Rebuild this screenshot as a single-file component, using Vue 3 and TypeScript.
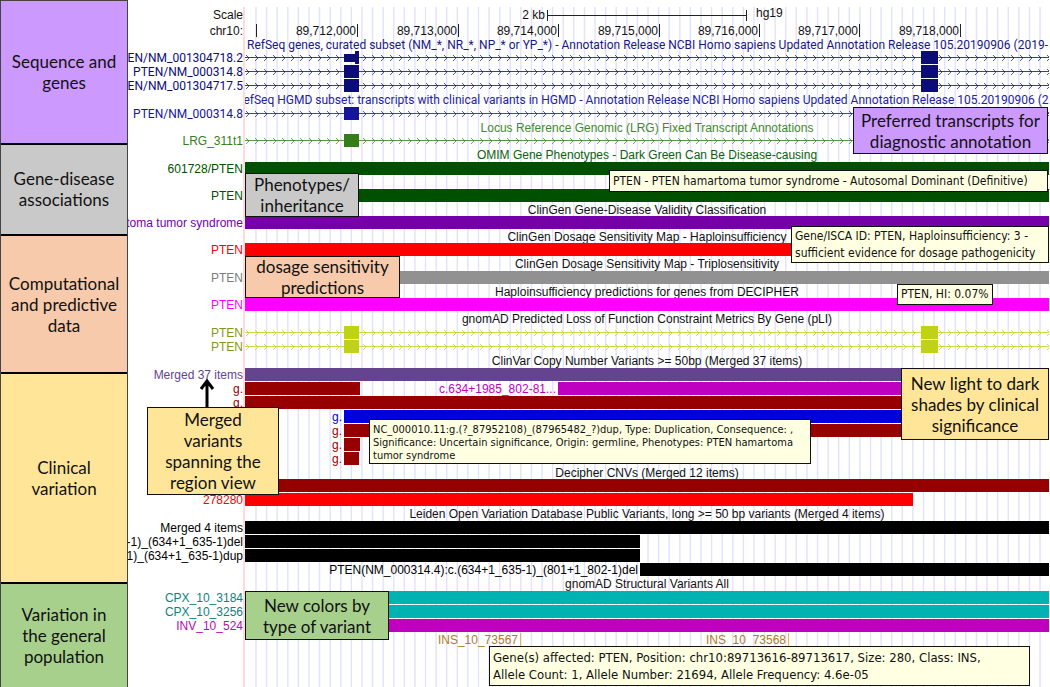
<script setup lang="ts">
interface Bar {
  from: number
  to: number
  color?: string
  label?: string
  thin?: boolean
}

interface Row {
  label: string
  color: string
  text?: string
  bars: Bar[]
  intron?: boolean
}

interface Track {
  title: string
  titleColor?: string
  titleClass?: string
  condensed?: boolean
  rows: Row[]
}

interface Note {
  name: string
  lines: string[]
}

/* Width of the plotted region in drawing units; bars are placed as a share of it. */
const SPAN = 804
const pct = (n: number): string => `${(n / SPAN) * 100}%`
const place = (bar: Bar, row: Row) => ({
  left: pct(bar.from),
  width: pct(bar.to - bar.from),
  background: bar.color ?? row.color,
})

const full: Bar[] = [{ from: 0, to: SPAN }]
const exons: Bar[] = [
  { from: 99, to: 114 },
  { from: 676, to: 693 },
]
const ink = '#111111'
const darkRed = '#960000'

const categories = [
  { name: 'sequence', label: 'Sequence and genes' },
  { name: 'disease', label: 'Gene-disease associations' },
  { name: 'computed', label: 'Computational and predictive data' },
  { name: 'clinical', label: 'Clinical variation' },
  { name: 'population', label: 'Variation in the general population' },
]

const gridLines = Array.from({ length: 75 }, (_, i) => 11 + i * 10.595)
const ticks = [
  { at: 11, label: '' },
  { at: 112, label: '89,712,000' },
  { at: 213, label: '89,713,000' },
  { at: 313, label: '89,714,000' },
  { at: 414, label: '89,715,000' },
  { at: 514, label: '89,716,000' },
  { at: 614, label: '89,717,000' },
  { at: 715, label: '89,718,000' },
]
const chevrons = Array.from({ length: 260 }, (_, i) => `M${1 + i * 9} 4l3 3l-3 3`).join('')

const tracks: Track[] = [
  {
    title:
      'RefSeq genes, curated subset (NM_*, NR_*, NP_* or YP_*) - Annotation Release NCBI Homo sapiens Updated Annotation Release 105.20190906 (2019-1',
    titleColor: '#191984',
    titleClass: 'long',
    condensed: true,
    rows: [
      {
        label: 'PTEN/NM_001304718.2',
        color: '#0c0c78',
        intron: true,
        bars: [
          { from: 99, to: 110, thin: true },
          { from: 110, to: 114 },
          { from: 676, to: 693 },
        ],
      },
      { label: 'PTEN/NM_000314.8', color: '#0c0c78', intron: true, bars: exons },
      { label: 'PTEN/NM_001304717.5', color: '#0c0c78', intron: true, bars: exons },
    ],
  },
  {
    title:
      'RefSeq HGMD subset: transcripts with clinical variants in HGMD - Annotation Release NCBI Homo sapiens Updated Annotation Release 105.20190906 (2019',
    titleColor: '#2222a8',
    titleClass: 'long tall shifted',
    condensed: true,
    rows: [{ label: 'PTEN/NM_000314.8', color: '#1414a0', intron: true, bars: exons }],
  },
  {
    title: 'Locus Reference Genomic (LRG) Fixed Transcript Annotations',
    titleColor: '#3f8a2c',
    rows: [{ label: 'LRG_311t1', color: '#357c1c', intron: true, bars: exons }],
  },
  {
    title: 'OMIM Gene Phenotypes - Dark Green Can Be Disease-causing',
    titleColor: '#0c620c',
    titleClass: 'tall',
    rows: [{ label: '601728/PTEN', color: '#005000', bars: full }],
  },
  { title: '', rows: [{ label: 'PTEN', color: '#005000', bars: full }] },
  {
    title: 'ClinGen Gene-Disease Validity Classification',
    rows: [{ label: 'PTEN hamartoma tumor syndrome', color: '#7500a8', bars: full }],
  },
  {
    title: 'ClinGen Dosage Sensitivity Map - Haploinsufficiency',
    rows: [{ label: 'PTEN', color: '#ff0000', bars: full }],
  },
  {
    title: 'ClinGen Dosage Sensitivity Map - Triplosensitivity',
    titleClass: 'tall',
    rows: [{ label: 'PTEN', color: '#919191', text: '#7c7c7c', bars: full }],
  },
  {
    title: 'Haploinsufficiency predictions for genes from DECIPHER',
    rows: [{ label: 'PTEN', color: '#ff00ff', bars: full }],
  },
  {
    title: 'gnomAD Predicted Loss of Function Constraint Metrics By Gene (pLI)',
    titleClass: 'tall',
    rows: [
      { label: 'PTEN', color: '#bfd217', text: '#869618', intron: true, bars: exons },
      { label: 'PTEN', color: '#bfd217', text: '#869618', intron: true, bars: exons },
    ],
  },
  {
    title: 'ClinVar Copy Number Variants >= 50bp (Merged 37 items)',
    titleClass: 'tall',
    rows: [
      { label: 'Merged 37 items', color: '#64438f', bars: full },
      {
        label: 'g.',
        color: darkRed,
        bars: [
          { from: 0, to: 115 },
          { from: 313, to: SPAN, color: '#c000c0', label: 'c.634+1985_802-81...' },
        ],
      },
      { label: 'g.', color: darkRed, bars: full },
      { label: '', color: '#0000df', bars: [{ from: 99, to: SPAN, label: 'g.' }] },
      { label: '', color: darkRed, bars: [{ from: 99, to: SPAN, label: 'g.' }] },
      { label: '', color: darkRed, bars: [{ from: 99, to: 115, label: 'g.' }] },
      { label: '', color: darkRed, bars: [{ from: 99, to: 114, label: 'g.' }] },
    ],
  },
  {
    title: 'Decipher CNVs (Merged 12 items)',
    rows: [
      { label: '', color: darkRed, bars: full },
      { label: '278280', color: '#ff0000', bars: [{ from: 0, to: 668 }] },
    ],
  },
  {
    title: 'Leiden Open Variation Database Public Variants, long >= 50 bp variants (Merged 4 items)',
    titleClass: 'tall',
    rows: [
      { label: 'Merged 4 items', color: '#000000', bars: full },
      { label: '3-1)_(634+1_635-1)del', color: '#000000', bars: [{ from: 0, to: 395 }] },
      { label: '-1)_(634+1_635-1)dup', color: '#000000', bars: [{ from: 0, to: 395 }] },
      {
        label: '',
        color: '#000000',
        bars: [{ from: 395, to: SPAN, label: 'PTEN(NM_000314.4):c.(634+1_635-1)_(801+1_802-1)del' }],
      },
    ],
  },
  {
    title: 'gnomAD Structural Variants All',
    titleClass: 'tall',
    rows: [
      { label: 'CPX_10_3184', color: '#00b3b3', text: '#108080', bars: full },
      { label: 'CPX_10_3256', color: '#00b3b3', text: '#108080', bars: full },
      { label: 'INV_10_524', color: '#bf00bf', text: '#b808b8', bars: full },
      {
        label: '',
        color: '#f5b040',
        text: '#b07c1c',
        bars: [
          { from: 275, to: 276, label: 'INS_10_73567' },
          { from: 543, to: 544, label: 'INS_10_73568' },
        ],
      },
    ],
  },
]

const callouts: Note[] = [
  { name: 'preferred', lines: ['Preferred transcripts for', 'diagnostic annotation'] },
  { name: 'phenotypes', lines: ['Phenotypes/', 'inheritance'] },
  { name: 'dosage', lines: ['dosage sensitivity', 'predictions'] },
  { name: 'merged', lines: ['Merged', 'variants', 'spanning the', 'region view'] },
  { name: 'shades', lines: ['New light to dark', 'shades by clinical', 'significance'] },
  { name: 'colors', lines: ['New colors by', 'type of variant'] },
]

const tooltips: Note[] = [
  { name: 'tip-omim', lines: ['PTEN - PTEN hamartoma tumor syndrome - Autosomal Dominant (Definitive)'] },
  {
    name: 'tip-isca',
    lines: ['Gene/ISCA ID: PTEN, Haploinsufficiency: 3 -', 'sufficient evidence for dosage pathogenicity'],
  },
  { name: 'tip-hi', lines: ['PTEN, HI: 0.07%'] },
  {
    name: 'tip-dup',
    lines: [
      'NC_000010.11:g.(?_87952108)_(87965482_?)dup, Type: Duplication, Consequence: ,',
      'Significance: Uncertain significance, Origin: germline, Phenotypes: PTEN hamartoma',
      'tumor syndrome',
    ],
  },
  {
    name: 'tip-ins',
    lines: [
      'Gene(s) affected: PTEN, Position: chr10:89713616-89713617, Size: 280, Class: INS,',
      'Allele Count: 1, Allele Number: 21694, Allele Frequency: 4.6e-05',
    ],
  },
]
</script>

<template>
  <div class="page">
    <aside class="categories">
      <div v-for="c in categories" :key="c.name" class="category" :class="c.name">
        <span>{{ c.label }}</span>
      </div>
    </aside>

    <main class="browser">
      <div class="backdrop">
        <svg class="grid" :viewBox="`0 0 ${SPAN} 100`" preserveAspectRatio="none" aria-hidden="true">
          <line v-for="x in gridLines" :key="x" :x1="x" :x2="x" y1="0" y2="100" />
        </svg>
      </div>

      <div class="row scale-row">
        <div class="label">Scale</div>
        <div class="lane">
          <span class="before" :style="{ right: pct(SPAN - 302) }">2 kb</span>
          <span class="scale-bar" :style="{ left: pct(302), width: pct(200) }"></span>
          <span class="assembly" :style="{ left: pct(511) }">hg19</span>
        </div>
      </div>
      <div class="row">
        <div class="label">chr10:</div>
        <div class="lane">
          <span v-for="t in ticks" :key="t.at" class="tick" :style="{ right: pct(SPAN - t.at - 1) }">{{ t.label }}</span>
        </div>
      </div>

      <section v-for="(track, ti) in tracks" :key="ti" :class="{ condensed: track.condensed }">
        <div class="title" :class="track.titleClass" :style="{ color: track.titleColor ?? ink }">
          <span>{{ track.title }}</span>
        </div>
        <div v-for="(row, ri) in track.rows" :key="ri" class="row" :style="{ color: row.text ?? row.color }">
          <div class="label"><span>{{ row.label }}</span></div>
          <div class="lane">
            <svg v-if="row.intron" class="intron" :style="{ color: row.color }" aria-hidden="true">
              <rect x="0" y="6" width="100%" height="1" />
              <path :d="chevrons" />
            </svg>
            <template v-for="(bar, bi) in row.bars" :key="bi">
              <span
                v-if="bar.label"
                class="before"
                :style="{ right: pct(SPAN - bar.from), color: row.text ?? bar.color ?? row.color }"
              >{{ bar.label }}</span>
              <span class="bar" :class="{ thin: bar.thin }" :style="place(bar, row)"></span>
            </template>
          </div>
        </div>
      </section>

      <svg class="arrow" viewBox="0 0 16 30" aria-hidden="true">
        <path d="M8 30V3M2 11L8 3L14 11" />
      </svg>

      <div v-for="n in callouts" :key="n.name" class="callout" :class="n.name">
        <span v-for="l in n.lines" :key="l">{{ l }}</span>
      </div>
      <div v-for="n in tooltips" :key="n.name" class="tooltip" :class="n.name" role="tooltip">
        <span v-for="l in n.lines" :key="l">{{ l }}</span>
      </div>
    </main>
  </div>
</template>

<style>
body {
  margin: 0;
  background: #ffffff;
}
</style>

<style scoped>
.page {
  display: flex;
  min-height: 100vh;
  overflow: hidden;
  font: 12px/14px "Liberation Sans", Arial, sans-serif;
  color: #111111;
}

.categories {
  box-sizing: border-box;
  flex: 0 0 128px;
  min-width: 0;
  display: grid;
  grid-template-columns: minmax(0, 1fr);
  grid-template-rows: 144fr 91fr 139fr 210fr 103fr;
  border: solid #444444;
  border-width: 1px 1px 0;
}
.category {
  display: flex;
  align-items: center;
  justify-content: center;
  padding: 0 6px;
  text-align: center;
  font: 17px/21px Lato, Carlito, sans-serif;
  color: #111111;
  border-bottom: 2px solid #000000;
}
.category:last-child {
  padding: 0 16px;
  border-bottom: 0;
}
.sequence { background: #cc99ff; }
.disease { background: #c9c9c9; }
.computed { background: #f7caac; }
.clinical { background: #ffe598; }
.population { background: #a8d08d; }

.browser {
  position: relative;
  flex: 1;
  min-width: 0;
  padding: 7px 1px 0 0;
}
.backdrop {
  position: absolute;
  inset: 7px 1px 0 115px;
  border-left: 2px solid #ffdcdc;
}
.grid {
  display: block;
  width: 100%;
  height: 100%;
}
.grid line {
  stroke: #e2e2fc;
  stroke-width: 1.4;
}

.row {
  position: relative;
  display: grid;
  grid-template-columns: 115px 1fr;
  column-gap: 2px;
  height: 14px;
}
.scale-row {
  height: 17px;
  line-height: 17px;
}
.label {
  display: flex;
  justify-content: flex-end;
  overflow: hidden;
  white-space: nowrap;
}
.lane {
  position: relative;
}
.condensed {
  font-family: Roboto, "Liberation Sans", sans-serif;
}
.title {
  position: relative;
  display: flex;
  justify-content: center;
  height: 13px;
  margin-left: 117px;
  overflow-x: clip;
  white-space: nowrap;
}
.title.tall {
  height: 14px;
  line-height: 15px;
}
.title.long {
  justify-content: flex-start;
  padding-left: 2px;
}
.title.shifted {
  padding-left: 0;
  text-indent: -9px;
}

.bar {
  position: absolute;
  top: 0;
  height: 13px;
}
.bar.thin {
  top: 3px;
  height: 8px;
}
.before {
  position: absolute;
  padding-right: 2px;
  white-space: nowrap;
}
.intron {
  position: absolute;
  width: 100%;
  height: 13px;
}
.intron rect {
  fill: currentColor;
  opacity: 0.8;
}
.intron path {
  fill: none;
  stroke: currentColor;
  stroke-width: 1;
  opacity: 0.7;
}

.scale-bar {
  position: absolute;
  top: 3px;
  height: 11px;
  box-sizing: border-box;
  border: solid #222222;
  border-width: 0 1px;
  background: linear-gradient(#222222, #222222) center / 100% 1px no-repeat;
}
.assembly {
  position: absolute;
  line-height: 12px;
}
.tick {
  position: absolute;
  height: 13px;
  border-right: 1px solid #222222;
  padding-right: 1px;
}

.arrow {
  position: absolute;
  left: 71px;
  top: 378px;
  width: 16px;
  height: 30px;
  fill: none;
  stroke: #000000;
  stroke-width: 3;
}

.callout,
.tooltip {
  position: absolute;
  box-sizing: border-box;
  display: flex;
  flex-direction: column;
  justify-content: center;
  border: 1px solid #111111;
  white-space: nowrap;
  color: #111111;
}
.callout {
  align-items: center;
  font: 17px/21px Lato, Carlito, sans-serif;
}
.preferred { right: 2px; top: 107px; width: 195px; height: 47px; background: #cc99ff; }
.phenotypes { left: 117px; top: 173px; width: 114px; height: 44px; background: #c9c9c9; }
.dosage { left: 117px; top: 256px; width: 155px; height: 42px; background: #f7caac; }
.merged { left: 19px; top: 407px; width: 132px; height: 88px; background: #ffe598; }
.shades { right: 1px; top: 368px; width: 148px; height: 72px; background: #ffe598; }
.colors { left: 117px; top: 591px; width: 144px; height: 49px; background: #a8d08d; }

.tooltip {
  padding: 0 3px;
  background: #ffffe1;
  font: 12px/17px "DejaVu Sans Condensed", "Noto Sans", sans-serif;
}
.tip-omim { right: 2px; top: 170px; width: 439px; height: 22px; }
.tip-isca { right: 1px; top: 226px; width: 258px; height: 37px; }
.tip-hi { right: 57px; top: 284px; width: 96px; height: 21px; }
.tip-dup { left: 241px; top: 419px; width: 442px; height: 45px; justify-content: flex-start; font-size: 11px; line-height: 13px; padding-top: 3px; }
.tip-ins { left: 361px; top: 646px; width: 541px; height: 40px; font-size: 13px; }
</style>
